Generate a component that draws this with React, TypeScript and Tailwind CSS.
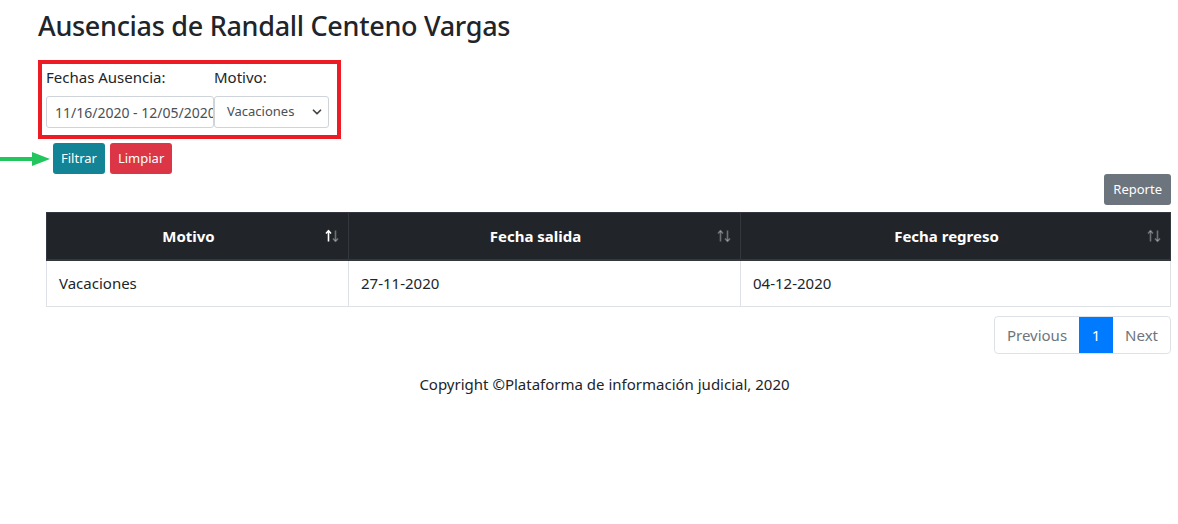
import { ChevronDown } from 'lucide-react'

function SortIcon({ active }: { active?: boolean }) {
  return (
    <svg width="14" height="13" viewBox="0 0 14 13" className="absolute right-[9px] top-1/2 -translate-y-1/2" fill="none" strokeWidth="1.6">
      <g stroke={active ? '#ffffff' : 'rgba(255,255,255,0.35)'}>
        <path d="M3.5 12V1.5" />
        <path d="M1 4l2.5-2.8L6 4" />
      </g>
      <g stroke="rgba(255,255,255,0.35)">
        <path d="M10.5 1v10.5" />
        <path d="M8 9l2.5 2.8L13 9" />
      </g>
    </svg>
  )
}

export default function App() {
  return (
    <div className="min-h-[524px] bg-white text-[#212529] font-['Noto_Sans','Open_Sans',sans-serif] text-base">
      <div className="pl-[38px] pr-[7px] pt-[9px]">
        <h3 className="text-[27px] font-medium leading-[34px] tracking-[-0.3px]">Ausencias de Randall Centeno Vargas</h3>

        {/* filtros */}
        <div className="mt-[17px] w-[303px] border-4 border-[#ed1c24] px-1 pt-[1px] pb-[7px]">
          <div className="flex">
            <div className="w-[168px]">
              <label className="block text-[15px] leading-[24px]">Fechas Ausencia:</label>
              <div className="mt-[7px] h-[32px] border border-[#ced4da] rounded-[3px] pl-2 flex items-center overflow-hidden whitespace-nowrap text-[14px] text-[#495057]">
                11/16/2020 - 12/05/2020
              </div>
            </div>
            <div className="w-[115px]">
              <label className="block text-[15px] leading-[24px]">Motivo:</label>
              <div className="mt-[7px] h-[32px] border border-[#ced4da] rounded-[3px] pl-3 pr-1 flex items-center justify-between text-[13px] text-[#495057]">
                <span>Vacaciones</span>
                <ChevronDown size={14} strokeWidth={3} className="text-[#444]" />
              </div>
            </div>
          </div>
        </div>

        <div className="flex items-center mt-[4px] -ml-[38px]">
          <svg width="50" height="14" viewBox="0 0 50 14" className="mr-[3px]">
            <rect x="0" y="5" width="34" height="4" fill="#22c55e" />
            <polygon points="32,0 50,7 32,14" fill="#22c55e" />
          </svg>
          <button className="h-[31px] px-[8px] rounded-[3px] bg-[#138496] text-white text-[13px]">Filtrar</button>
          <button className="ml-[5px] h-[31px] px-[8px] rounded-[3px] bg-[#dc3545] text-white text-[13px]">Limpiar</button>
        </div>

        <div className="flex justify-end">
          <button className="h-[31px] px-[9px] rounded-[3px] bg-[#6c757d] text-white text-[13px]">Reporte</button>
        </div>

        <div className="ml-[8px] mt-[7px]">
          <table className="w-full border-collapse border border-[#dee2e6] text-[15px]">
            <thead>
              <tr className="bg-[#212529] text-white h-[47px]">
                <th className="relative w-[302px] border border-[#32383e] border-b-2 font-bold text-center pl-3 pr-[30px]">
                  Motivo
                  <SortIcon active />
                </th>
                <th className="relative w-[392px] border border-[#32383e] border-b-2 font-bold text-center pl-3 pr-[30px]">
                  Fecha salida
                  <SortIcon />
                </th>
                <th className="relative border border-[#32383e] border-b-2 font-bold text-center pl-3 pr-[30px]">
                  Fecha regreso
                  <SortIcon />
                </th>
              </tr>
            </thead>
            <tbody>
              <tr className="h-[47px]">
                <td className="border border-[#dee2e6] px-3">Vacaciones</td>
                <td className="border border-[#dee2e6] px-3">27-11-2020</td>
                <td className="border border-[#dee2e6] px-3">04-12-2020</td>
              </tr>
            </tbody>
          </table>
        </div>

        <div className="flex justify-end mt-[9px]">
          <div className="flex h-[38px] border border-[#dee2e6] rounded-[4px] overflow-hidden text-[15px]">
            <span className="px-3 flex items-center text-[#6c757d]">Previous</span>
            <span className="w-[34px] flex items-center justify-center bg-[#007bff] text-white">1</span>
            <span className="px-3 flex items-center text-[#6c757d]">Next</span>
          </div>
        </div>

        <p className="text-center mt-[18px] text-[15px] leading-[24px]">Copyright ©Plataforma de información judicial, 2020</p>
      </div>
    </div>
  )
}
